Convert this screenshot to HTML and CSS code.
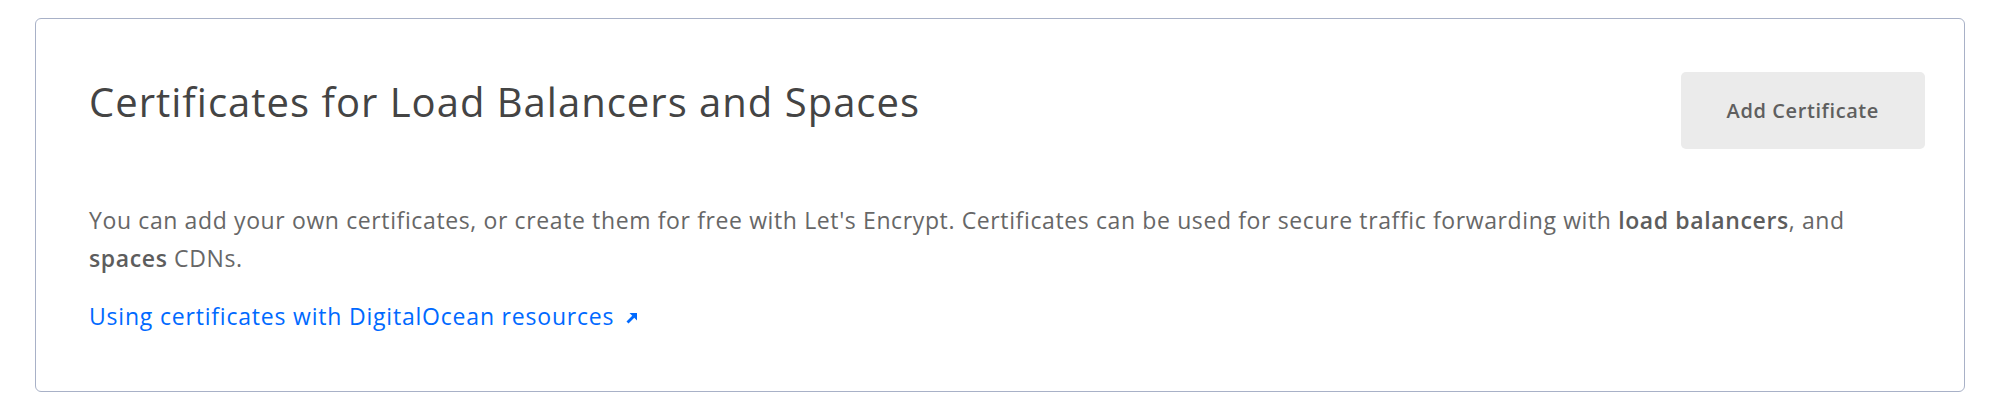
FILE: index.html
```html
<!DOCTYPE html>
<html lang="en">
<head>
<meta charset="utf-8">
<title>Certificates</title>
<link rel="stylesheet" href="styles.css">
</head>
<body>
<main class="page">
  <section class="card">
    <div class="card-header">
      <h2 class="card-title">Certificates for Load Balancers and Spaces</h2>
      <button class="btn-secondary" type="button">Add Certificate</button>
    </div>
    <p class="card-text">You can add your own certificates, or create them for free with Let's Encrypt. Certificates can be used for secure traffic forwarding with <strong>load balancers</strong>, and <strong>spaces</strong> CDNs.</p>
    <a class="doc-link" href="#">Using certificates with DigitalOcean resources
      <svg class="link-arrow" viewBox="0 0 12 12" width="12" height="12" aria-hidden="true"><path d="M1.5 10.5 L7.5 4.5" fill="none" stroke="currentColor" stroke-width="2.8"/><path d="M3.5 1 H11 V8.5 Z" fill="currentColor"/></svg>
    </a>
  </section>
</main>
</body>
</html>
```
FILE: styles.css
```css
html, body {
  margin: 0;
  padding: 0;
  background: #ffffff;
}

.page {
  padding: 18px 35px;
  font-family: "Open Sans", "Lato", sans-serif;
}

.card {
  border: 1px solid #a8b1c7;
  border-radius: 6px;
  padding: 37px 39px 60px 53px;
}

.card-header {
  display: flex;
  justify-content: space-between;
  align-items: flex-start;
}

.card-title {
  margin: 22px 0 0;
  font-size: 40px;
  line-height: 48px;
  font-weight: 400;
  letter-spacing: 1px;
  color: #444444;
}

.btn-secondary {
  margin-top: 16px;
  font-family: inherit;
  font-size: 20px;
  font-weight: 600;
  line-height: 25px;
  letter-spacing: 0.6px;
  color: #5f5f5f;
  background: #ebebeb;
  border: none;
  border-radius: 5px;
  padding: 26px 46px;
}

.card-text {
  margin: 52px 0 0;
  max-width: 1800px;
  font-size: 23px;
  line-height: 38px;
  letter-spacing: 0.62px;
  color: #676767;
}

.card-text strong {
  font-weight: 600;
  color: #5d5d5d;
}

.doc-link {
  display: inline-flex;
  align-items: center;
  gap: 12px;
  margin-top: 24px;
  font-size: 23px;
  line-height: 30px;
  letter-spacing: 0.8px;
  color: #0069ff;
  text-decoration: none;
}

.link-arrow {
  margin-top: 4px;
}
```
